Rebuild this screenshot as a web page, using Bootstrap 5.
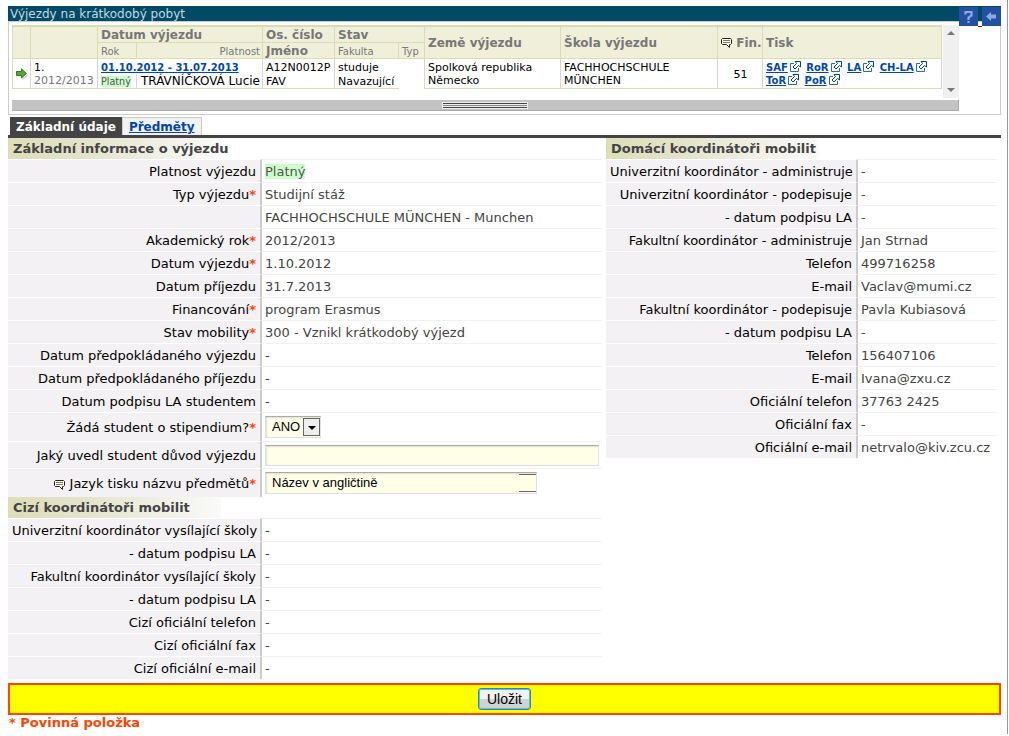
<!DOCTYPE html>
<html lang="cs">
<head>
<meta charset="utf-8">
<meta name="viewport" content="width=device-width, initial-scale=1">
<title>Výjezdy na krátkodobý pobyt</title>
<link href="https://cdn.jsdelivr.net/npm/bootstrap@5.3.0/dist/css/bootstrap.min.css" rel="stylesheet">
<style>
  body { font-family: Verdana, "DejaVu Sans", sans-serif; font-size: 13px; line-height: 16px; color: #444; background: #fff; }
  a { color: #0046ad; font-weight: bold; }
  .page-frame { min-height: 734px; padding: 6px 6px 0 8px; border-right: 1px solid #999; margin-right: 1px; }
  .title-bar { background: #004a66; color: #c3d9e2; height: 15px; padding-left: 2px; font-size: 12px; line-height: 16px; }
  .tool-buttons { position: absolute; top: 1px; right: 0; }
  .tool-btn { width: 19px; height: 19px; background: #2450a0; border: 0; }
  .tool-dash { width: 4px; height: 1px; background: #900; margin-top: 19px; }
  .panel-box { border: 1px solid #ccc; padding: 3px 41px 3px 3px; height: 94px; }

  .trips { table-layout: fixed; border-collapse: separate; border-spacing: 0; font-size: 11px; line-height: 13px; color: #000; border-top: 2px solid #dcdcb4; border-left: 1px solid #dcdcb4; }
  .trips th, .trips td { padding: 1px 2px 0 3px; border-right: 1px solid #d6d6d6; border-bottom: 1px solid #dcdcb4; white-space: nowrap; }
  .trips th { background: #f0f0da; color: #777; height: 16px; font-size: 12px; border-right-color: #dcdcb4; }
  .trips th.sub-head { font-weight: normal; font-size: 10px; }
  .trips td { height: 15px; }
  .trips .person-name { font-size: 12px; }
  .trips .open-row { border-bottom: 0; }
  .trips .open-side { border-right: 0; }
  .trips .wrap-cell { white-space: normal; }
  .trips a { font-size: 10px; }
  .valid-mark { background: #cfc; color: #555; }
  .muted-text { color: #777; }
  .print-links svg { margin: 0 2px 0 2px; vertical-align: -1px; }
  .scroll-track { flex: 0 0 16px; height: 73px; background: #f0f0f0; margin-left: 1px; }
  .splitter { height: 11px; margin-top: 2px; background: #c3c3c3; border: solid #aaa; border-width: 0 1px 1px 0; }
  .splitter-grip { width: 84px; height: 5px; border: solid #444; border-width: 1px 0; outline: 1px solid #eee; background: linear-gradient(#eee 0 1px, #888 1px 2px, #eee 2px); }

  .tab-strip { height: 21px; border-bottom: 3px solid #444; margin-top: 2px; padding-left: 2px; }
  .tab-strip .nav-link { font-size: 12px; font-weight: bold; line-height: 20px; padding: 0 6px; height: 18px; border-radius: 0; }
  .tab-strip .nav-link.active { background: #444; color: #fff; }
  .tab-strip .nav-link:not(.active) { background: #f3f1f3; border: 1px solid #ccc; border-bottom: 0; text-decoration: underline; color: #0046ad; line-height: 18px; }

  .section-head { width: 213px; height: 21px; margin: 0; padding-left: 4px; border-left: 1px solid #dcdcb4; font-size: 13px; line-height: 21px; font-weight: bold; color: #444; white-space: nowrap; background: linear-gradient(90deg, #dedeb9, #e3e3cb 35%, #fafafa); }
  .fields { border-collapse: separate; border-spacing: 0; table-layout: fixed; width: 100%; }
  .fields th, .fields td { height: 23px; padding: 2px 4px 0; border-top: 1px solid #f3f1f3; white-space: nowrap; }
  .fields th { background: #f3f1f3; border-top-color: #fff; border-right: 2px solid #ccc; font-weight: normal; text-align: right; color: #000; }
  .fields td { padding-left: 3px; padding-right: 3px; }
  .fields .select-row > * { height: 29px; }
  .fields .input-row > * { height: 27px; }
  .fields .select-row > td, .fields .input-row > td { padding-top: 0; }
  .star { color: #ff4500; font-weight: bold; }
  .col-main { flex: 1 1 594px; margin-right: 4px; }
  .col-side { flex: 0 0 391px; margin-right: 4px; }
  .label-main { width: 254px; }
  .label-side { width: 252px; }
  .field-box { height: 21px; border: 1px solid #dde; border-top-color: #aaa; border-radius: 0; background: #ffffe8; box-shadow: inset 1px 1px 2px #ddc; color: #000; font-family: "Liberation Sans", sans-serif; font-size: 13px; padding: 0 6px; display: block; appearance: none; }
  .select-short { width: 56px; height: 22px; }
  .select-long { width: 272px; height: 22px; }
  .arrow-mark { position: absolute; right: 0; top: 2px; pointer-events: none; }

  .save-bar { border: 2px solid #ff4500; background: #ff0; height: 32px; margin-top: 4px; }
  .save-btn { height: 22px; width: 53px; border: 1px solid #3c7fb1; border-radius: 3px; box-shadow: inset 0 0 0 1px #48c8f4; background: linear-gradient(#f2f2f2 50%, #d4d4d4 50%, #cfcfcf); font-family: "Liberation Sans", sans-serif; font-size: 14px; line-height: 20px; color: #000; padding: 0; }
  .required-note { color: #ff4500; font-weight: bold; padding-left: 1px; }
</style>
</head>
<body>
<svg class="d-none" xmlns="http://www.w3.org/2000/svg">
  <symbol id="ext" viewBox="0 0 11 11"><path d="M4 2.500H.500V10.500H8.500V7" fill="none" stroke="#2d7190"/><path d="M5 .500H10.500V6L8.500 4.500 5 8 3 6 6.500 2.500Z" fill="#fff" stroke="#004a66"/></symbol>
  <symbol id="note" viewBox="0 0 11 10"><path d="M1.500.500H9.500L10.500 1.500V5.500L9.500 6.500H8.500V9.500L5.500 6.500H1.500L.500 5.500V1.500Z" fill="#ffffdc" stroke="#222"/><path d="M2 2.500H9M2 4.500H9" stroke="#777"/></symbol>
</svg>
<div class="page-frame">
  <header class="position-relative">
    <div class="title-bar">Výjezdy na krátkodobý pobyt</div>
    <div class="tool-buttons d-flex">
      <button type="button" class="tool-btn p-0 d-flex" aria-label="Nápověda"><svg width="19" height="19"><path d="M6.500 7.500V5H12.500V8.500L9.500 10.500V13M9.500 14V16" fill="none" stroke="#8caae0" stroke-width="2.200"/></svg></button>
      <span class="tool-dash"></span>
      <button type="button" class="tool-btn p-0 d-flex" aria-label="Zpět"><svg width="19" height="19"><path d="M4 9.500 9 5V7.500H14V11.500H9V14Z" fill="#8caae0"/></svg></button>
    </div>
  </header>

  <section class="panel-box">
    <div class="d-flex">
      <div class="flex-grow-1">
        <table class="trips w-100">
          <colgroup><col style="width:18px"><col style="width:67px"><col style="width:39px"><col style="width:126px"><col style="width:72px"><col style="width:64px"><col style="width:26px"><col style="width:136px"><col style="width:157px"><col style="width:45px"><col></colgroup>
          <thead>
            <tr>
              <th rowspan="2"></th><th rowspan="2"></th><th colspan="2">Datum výjezdu</th><th>Os. číslo</th><th colspan="2">Stav</th>
              <th rowspan="2">Země výjezdu</th><th rowspan="2">Škola výjezdu</th>
              <th rowspan="2" class="text-end"><svg width="11" height="10"><use href="#note"/></svg> Fin.</th><th rowspan="2">Tisk</th>
            </tr>
            <tr>
              <th class="sub-head">Rok</th><th class="sub-head text-end">Platnost</th><th>Jméno</th><th class="sub-head">Fakulta</th><th class="sub-head">Typ</th>
            </tr>
          </thead>
          <tbody>
            <tr>
              <td rowspan="2" class="p-0"><svg class="d-block mx-auto" width="13" height="12"><path d="M2 9.500H9L12.500 6V8L7.500 12V10Z" fill="#ccc"/><path d="M1.500 3.500H6.500V.800L11.500 5.500 6.500 10V7.500H1.500Z" fill="#5ba33b" stroke="#347c22"/></svg></td>
              <td rowspan="2">1.<br><span class="muted-text">2012/2013</span></td>
              <td colspan="2" class="open-row"><a href="#">01.10.2012 - 31.07.2013</a></td>
              <td class="open-row">A12N0012P</td>
              <td colspan="2" class="open-row">studuje</td>
              <td rowspan="2" class="wrap-cell">Spolková republika Německo</td>
              <td rowspan="2" class="wrap-cell">FACHHOCHSCHULE MÜNCHEN</td>
              <td rowspan="2" class="text-center">51</td>
              <td rowspan="2" class="print-links wrap-cell">
                <a href="#">SAF</a><svg width="11" height="11"><use href="#ext"/></svg>
                <a href="#">RoR</a><svg width="11" height="11"><use href="#ext"/></svg>
                <a href="#">LA</a><svg width="11" height="11"><use href="#ext"/></svg>
                <a href="#">CH-LA</a><svg width="11" height="11"><use href="#ext"/></svg><br>
                <a href="#">ToR</a><svg width="11" height="11"><use href="#ext"/></svg>
                <a href="#">PoR</a><svg width="11" height="11"><use href="#ext"/></svg>
              </td>
            </tr>
            <tr>
              <td><small class="valid-mark">Platný</small></td>
              <td class="person-name text-end">TRÁVNÍČKOVÁ Lucie</td><td>FAV</td><td class="open-side">Navazující</td><td class="open-row"></td>
            </tr>
          </tbody>
        </table>
      </div>
      <div class="scroll-track d-flex flex-column align-items-center justify-content-between py-1">
        <svg width="8" height="8"><path d="M0 6 4 2 8 6Z" fill="#777"/></svg>
        <svg width="8" height="8"><path d="M0 2 4 6 8 2Z" fill="#777"/></svg>
      </div>
    </div>
    <div class="splitter d-flex align-items-center justify-content-center"><div class="splitter-grip"></div></div>
  </section>

  <nav class="tab-strip nav">
    <a class="nav-link active" href="#">Základní údaje</a>
    <a class="nav-link" href="#">Předměty</a>
  </nav>

  <form>
    <div class="d-flex align-items-start">
      <div class="col-main">
        <h2 class="section-head">Základní informace o výjezdu</h2>
        <table class="fields">
          <colgroup><col class="label-main"><col></colgroup>
          <tbody>
          <tr><th>Platnost výjezdu</th><td><span class="valid-mark">Platný</span></td></tr>
          <tr><th>Typ výjezdu<span class="star">*</span></th><td>Studijní stáž</td></tr>
          <tr><th></th><td>FACHHOCHSCHULE MÜNCHEN - Munchen</td></tr>
          <tr><th>Akademický rok<span class="star">*</span></th><td>2012/2013</td></tr>
          <tr><th>Datum výjezdu<span class="star">*</span></th><td>1.10.2012</td></tr>
          <tr><th>Datum příjezdu</th><td>31.7.2013</td></tr>
          <tr><th>Financování<span class="star">*</span></th><td>program Erasmus</td></tr>
          <tr><th>Stav mobility<span class="star">*</span></th><td>300 - Vznikl krátkodobý výjezd</td></tr>
          <tr><th>Datum předpokládaného výjezdu</th><td>-</td></tr>
          <tr><th>Datum předpokládaného příjezdu</th><td>-</td></tr>
          <tr><th>Datum podpisu LA studentem</th><td>-</td></tr>
          <tr class="select-row"><th><label for="grant">Žádá student o stipendium?<span class="star">*</span></label></th>
            <td><div class="position-relative select-short"><select id="grant" class="field-box select-short"><option>ANO</option><option>NE</option></select>
              <svg class="arrow-mark" width="18" height="18"><rect x=".5" y=".5" width="16" height="17" fill="#eee" stroke="#666"/><path d="M5 8H13L9 12Z" fill="#000"/></svg></div></td></tr>
          <tr class="input-row"><th><label for="reason">Jaký uvedl student důvod výjezdu</label></th><td><input id="reason" type="text" class="field-box w-100"></td></tr>
          <tr class="select-row"><th><svg width="11" height="10"><use href="#note"/></svg> <label for="lang">Jazyk tisku názvu předmětů<span class="star">*</span></label></th>
            <td><div class="position-relative select-long"><select id="lang" class="field-box select-long"><option>Název v angličtině</option></select>
              <svg class="arrow-mark" width="18" height="18"><path d="M0 .5H17M0 17.500H17" stroke="#666"/></svg></div></td></tr>
          </tbody>
        </table>
        <h2 class="section-head">Cizí koordinátoři mobilit</h2>
        <table class="fields">
          <colgroup><col class="label-main"><col></colgroup>
          <tbody>
          <tr><th>Univerzitní koordinátor vysílající školy</th><td>-</td></tr>
          <tr><th>- datum podpisu LA</th><td>-</td></tr>
          <tr><th>Fakultní koordinátor vysílající školy</th><td>-</td></tr>
          <tr><th>- datum podpisu LA</th><td>-</td></tr>
          <tr><th>Cizí oficiální telefon</th><td>-</td></tr>
          <tr><th>Cizí oficiální fax</th><td>-</td></tr>
          <tr><th>Cizí oficiální e-mail</th><td>-</td></tr>
          </tbody>
        </table>
      </div>
      <div class="col-side">
        <h2 class="section-head">Domácí koordinátoři mobilit</h2>
        <table class="fields">
          <colgroup><col class="label-side"><col></colgroup>
          <tbody>
          <tr><th>Univerzitní koordinátor - administruje</th><td>-</td></tr>
          <tr><th>Univerzitní koordinátor - podepisuje</th><td>-</td></tr>
          <tr><th>- datum podpisu LA</th><td>-</td></tr>
          <tr><th>Fakultní koordinátor - administruje</th><td>Jan Strnad</td></tr>
          <tr><th>Telefon</th><td>499716258</td></tr>
          <tr><th>E-mail</th><td>Vaclav@mumi.cz</td></tr>
          <tr><th>Fakultní koordinátor - podepisuje</th><td>Pavla Kubiasová</td></tr>
          <tr><th>- datum podpisu LA</th><td>-</td></tr>
          <tr><th>Telefon</th><td>156407106</td></tr>
          <tr><th>E-mail</th><td>Ivana@zxu.cz</td></tr>
          <tr><th>Oficiální telefon</th><td>37763 2425</td></tr>
          <tr><th>Oficiální fax</th><td>-</td></tr>
          <tr><th>Oficiální e-mail</th><td>netrvalo@kiv.zcu.cz</td></tr>
          </tbody>
        </table>
      </div>
    </div>
    <div class="save-bar d-flex align-items-center justify-content-center"><button type="submit" class="save-btn">Uložit</button></div>
    <div class="required-note">* Povinná položka</div>
  </form>
</div>
<script src="https://cdn.jsdelivr.net/npm/bootstrap@5.3.0/dist/js/bootstrap.bundle.min.js"></script>
</body>
</html>
